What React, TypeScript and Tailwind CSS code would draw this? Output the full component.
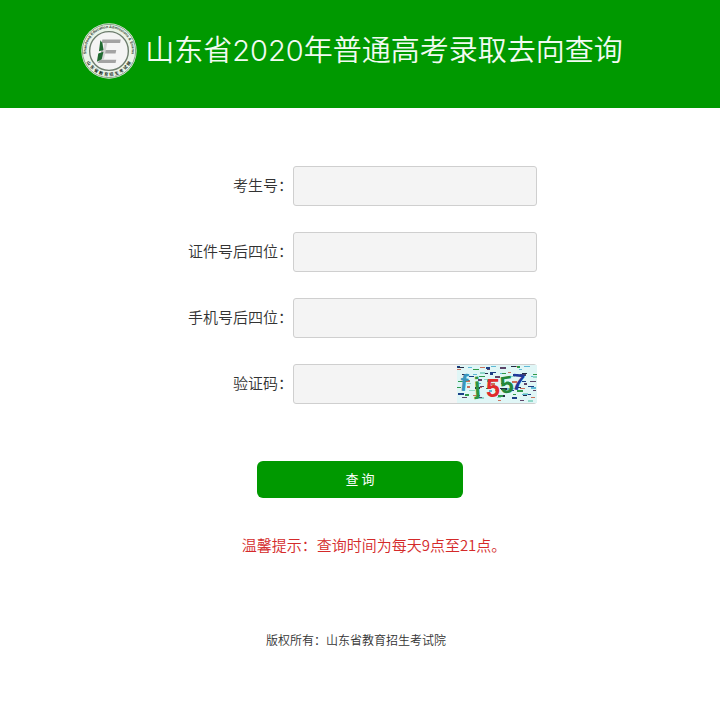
import { useState } from "react";

interface FieldItem {
  id: string;
  label: string;
}

const fields: FieldItem[] = [
  { id: "examinee", label: "考生号：" },
  { id: "idCard", label: "证件号后四位：" },
  { id: "phone", label: "手机号后四位：" },
];

const inputStyle =
  "h-10 w-full rounded-[3px] border border-[#cfcfcf] bg-[#f4f4f4] px-2 text-sm text-[#333] outline-none focus:border-[#009900]";

const labelStyle = "w-[105px] pb-0.5 text-right text-[15px] leading-6";

// 验证码干扰线
const noiseColors = ["#1c3f86", "#2f9a4a", "#222b45", "#5fb9d6", "#c9705c", "#5c4468", "#8fd8c8"];
const noise = Array.from({ length: 95 }, (_, i) => ({
  x: (i * 37 + ((i * i) % 11)) % 77,
  y: 1 + ((i * 23 + ((i * i) % 7)) % 35),
  width: 3 + ((i * 5) % 4),
  height: i % 3 === 0 ? 2 : 1,
  color: noiseColors[(i * 3 + (i % 4)) % noiseColors.length],
}));

// 徽标下方环形文字
const logoChars = "山东省教育招生考试院".split("");

const Logo = () => (
  <svg viewBox="36 39 162 162" className="h-14 w-14 shrink-0" aria-hidden="true">
    <defs>
      <path id="logo-top" d="M 59 151 A 66 66 0 1 1 175 151" />
    </defs>
    <circle cx="117" cy="120" r="80" fill="#e9f3e7" />
    <circle cx="117" cy="120" r="77" fill="none" stroke="#5f7d5f" strokeWidth="2" />
    <circle cx="117" cy="120" r="56" fill="#f4f4f4" stroke="#6d7d6d" strokeWidth="4" />
    <text fontSize="11" fontWeight="700" fill="#2f3d2f" className="font-['Liberation_Sans',sans-serif]">
      <textPath href="#logo-top" startOffset="50%" textAnchor="middle">
        Shandong Education Admissions &amp; Exams
      </textPath>
    </text>
    <g
      fontSize="12"
      fontWeight="700"
      fill="#222c22"
      textAnchor="middle"
      className="font-['Noto_Sans_CJK_SC',sans-serif]"
    >
      {logoChars.map((char, i) => (
        <text key={char} x="117" y="192" transform={`rotate(${59 - i * 13} 117 120)`}>
          {char}
        </text>
      ))}
    </g>
    <path d="M98 87 H151 L149 97 H96 Z" fill="#a3a3a3" />
    <path d="M95 117 H138 L136 127 H93 Z" fill="#a3a3a3" />
    <path d="M90 145 H138 L136 155 H84 Z" fill="#a3a3a3" />
    <path d="M104 97 L112 97 L102 145 L94 145 Z" fill="#d3d3d3" />
    <path d="M92 89 L98 97 L101 117 L88 121 Z" fill="#1f6b30" />
    <path d="M86 127 L101 122 L96 144 L82 151 Z" fill="#1f6b30" />
  </svg>
);

const Captcha = () => (
  <svg viewBox="0 0 80 38" className="h-[38px] w-20" role="img" aria-label="验证码图片">
    <rect width="80" height="38" fill="#e0f6f6" />
    {noise.map((item, i) => (
      <rect
        key={i}
        x={item.x}
        y={item.y}
        width={item.width}
        height={item.height}
        fill={item.color}
      />
    ))}
    <g className="font-['Liberation_Sans',sans-serif]" fontWeight="700">
      <text x="3" y="26" fontSize="24" fill="#3996bd" transform="rotate(6 7 18)">f</text>
      <text x="17" y="29" fontSize="24" fill="#2c9440" transform="rotate(-4 21 22)">j</text>
      <text x="29" y="32" fontSize="25" fill="#e02b2b">5</text>
      <text x="43" y="28" fontSize="24" fill="#23883a" transform="rotate(-8 49 19)">5</text>
      <text x="55" y="25" fontSize="23" fill="#21399b" transform="rotate(6 61 17)">7</text>
    </g>
  </svg>
);

const App = () => {
  const [code, setCode] = useState("");

  return (
    <div className="min-h-screen bg-white font-['Noto_Sans_CJK_SC',sans-serif] font-[350] text-[#333]">
      {/* 顶部标题 */}
      <header className="flex h-[108px] items-start justify-center gap-2 bg-[#009900] pr-4 pt-[23px]">
        <Logo />
        <h1 className="pt-1 font-['Inter','Noto_Sans_CJK_SC',sans-serif] text-[29px] font-[350] leading-[48px] text-[#f2fbf2]">
          山东省2020年普通高考录取去向查询
        </h1>
      </header>

      <main className="flex flex-col items-center pt-[58px]">
        <form className="flex flex-col items-center" onSubmit={(e) => e.preventDefault()}>
          <div className="flex flex-col gap-[26px] pl-[5px]">
            {fields.map((field) => (
              <div key={field.id} className="flex items-center">
                <label htmlFor={field.id} className={labelStyle}>
                  {field.label}
                </label>
                <div className="w-[244px]">
                  <input id={field.id} type="text" className={inputStyle} />
                </div>
              </div>
            ))}

            {/* 验证码 */}
            <div className="flex items-center">
              <label htmlFor="captcha" className={labelStyle}>
                验证码：
              </label>
              <div className="relative w-[244px]">
                <input
                  id="captcha"
                  type="text"
                  value={code}
                  onChange={(e) => setCode(e.target.value)}
                  className={inputStyle}
                />
                <div className="absolute right-0 top-px">
                  <Captcha />
                </div>
              </div>
            </div>
          </div>

          <button
            type="submit"
            className="mt-[57px] h-[37px] w-[206px] cursor-pointer rounded-md bg-[#009900] pb-0.5 text-[13px] font-normal text-white"
          >
            查 询
          </button>
        </form>

        {/* 温馨提示 */}
        <p className="mt-[35px] pl-7 text-[15px] leading-6 text-[#d42a2a]">
          温馨提示：查询时间为每天9点至21点。
        </p>
      </main>

      <footer className="pb-8 pr-2 pt-[73px] text-center text-xs leading-5">
        版权所有：山东省教育招生考试院
      </footer>
    </div>
  );
};

export default App;
